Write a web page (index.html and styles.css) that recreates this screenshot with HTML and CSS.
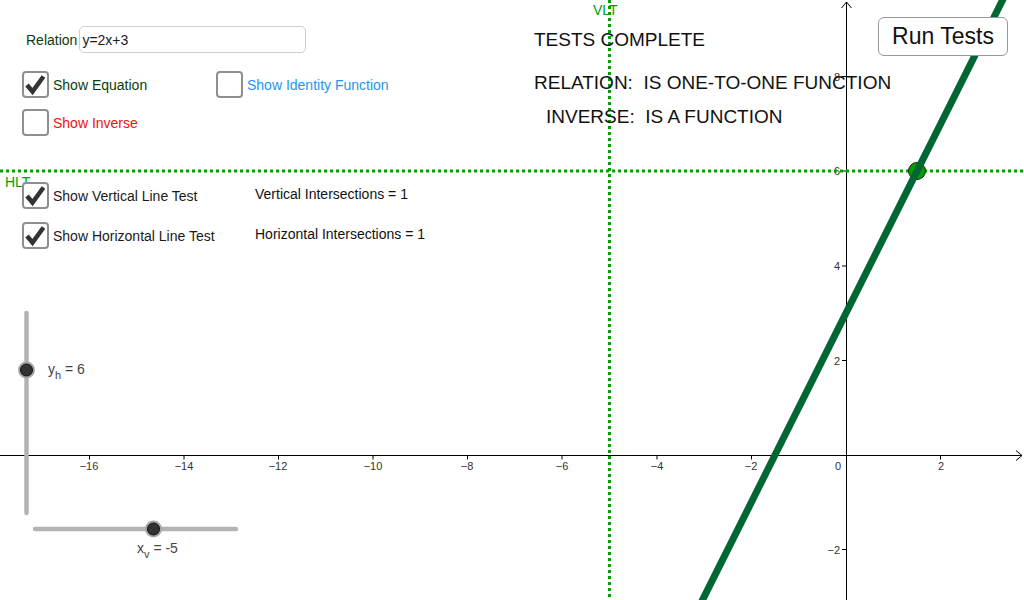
FILE: index.html
```html
<!DOCTYPE html>
<html lang="en">
<head>
<meta charset="UTF-8">
<meta name="viewport" content="width=device-width, initial-scale=1.0">
<title>One-to-One Function Tests</title>
<link rel="stylesheet" href="styles.css">
</head>
<body>
<div class="applet">
    <!-- graphics view: axes, test lines, relation, sliders -->
    <svg class="graph" width="1024" height="600" viewBox="0 0 1024 600">
        <g stroke="#000" stroke-width="1" fill="none">
            <line x1="0" y1="455.5" x2="1022" y2="455.5"/>
            <polyline points="1016,450.5 1022,455.5 1016,460.5"/>
            <line x1="846.5" y1="2" x2="846.5" y2="600"/>
            <polyline points="841.5,8 846.5,2 851.5,8"/>
            <path d="M89.5 455.5v4M184 455.5v4M278.5 455.5v4M373 455.5v4M467.5 455.5v4M562 455.5v4M657 455.5v4M751.5 455.5v4M940.5 455.5v4"/>
            <path d="M842 76.5h4.5M842 171h4.5M842 266h4.5M842 360.5h4.5M842 549.5h4.5"/>
        </g>
        <g class="tick-label" text-anchor="middle">
            <text x="89" y="470">−16</text>
            <text x="184" y="470">−14</text>
            <text x="278" y="470">−12</text>
            <text x="373" y="470">−10</text>
            <text x="467" y="470">−8</text>
            <text x="562" y="470">−6</text>
            <text x="657" y="470">−4</text>
            <text x="751" y="470">−2</text>
            <text x="838" y="470">0</text>
            <text x="941" y="470">2</text>
        </g>
        <g class="tick-label" text-anchor="end">
            <text x="840" y="80.5">8</text>
            <text x="840" y="175">6</text>
            <text x="840" y="270">4</text>
            <text x="840" y="364.5">2</text>
            <text x="840" y="553.5">−2</text>
        </g>

        <!-- vertical and horizontal line tests -->
        <g stroke="#00a000" stroke-width="3" stroke-dasharray="3 3">
            <line x1="609.5" y1="0" x2="609.5" y2="600"/>
            <line x1="0" y1="171" x2="1024" y2="171"/>
        </g>
        <text class="test-label" x="593" y="15">VLT</text>
        <text class="test-label" x="5" y="187">HLT</text>

        <!-- relation y=2x+3 -->
        <circle cx="917" cy="171" r="8.5" fill="#00a000" stroke="#1a1a1a" stroke-width="1"/>
        <line x1="697.5" y1="610" x2="1007.6" y2="-10" stroke="#006633" stroke-width="7"/>

        <!-- slider y_h -->
        <line x1="26.5" y1="313" x2="26.5" y2="513" stroke="#b3b3b3" stroke-width="4.5" stroke-linecap="round"/>
        <circle cx="26.5" cy="370" r="8.5" fill="#a6a6a6"/>
        <circle cx="26.5" cy="370" r="6" fill="#333" stroke="#111" stroke-width="1"/>
        <text class="slider-label" x="48" y="374">y<tspan class="sub" dy="5">h</tspan><tspan dy="-5"> = 6</tspan></text>

        <!-- slider x_v -->
        <line x1="35" y1="529" x2="236" y2="529" stroke="#b3b3b3" stroke-width="4.5" stroke-linecap="round"/>
        <circle cx="153.5" cy="529" r="8.5" fill="#a6a6a6"/>
        <circle cx="153.5" cy="529" r="6" fill="#333" stroke="#111" stroke-width="1"/>
        <text class="slider-label" x="137" y="553">x<tspan class="sub" dy="5">v</tspan><tspan dy="-5"> = -5</tspan></text>
    </svg>

    <div class="controls">
        <div class="row row-relation">
            <span class="relation-label">Relation</span>
            <input class="relation-input" type="text" value="y=2x+3">
        </div>
        <div class="row row-equation">
            <label class="opt opt-narrow">
                <span class="box"><svg width="23" height="23" viewBox="0 0 23 23"><path d="M3 12 L8.5 18.5 L19.5 3.5" fill="none" stroke="#333" stroke-width="4.5"/></svg></span>
                <span class="text-green">Show Equation</span>
            </label>
            <label class="opt">
                <span class="box"></span>
                <span class="text-blue">Show Identity Function</span>
            </label>
        </div>
        <div class="row row-inverse">
            <label class="opt">
                <span class="box"></span>
                <span class="text-red">Show Inverse</span>
            </label>
        </div>
        <div class="row row-vlt">
            <label class="opt opt-wide">
                <span class="box"><svg width="23" height="23" viewBox="0 0 23 23"><path d="M3 12 L8.5 18.5 L19.5 3.5" fill="none" stroke="#333" stroke-width="4.5"/></svg></span>
                <span>Show Vertical Line Test</span>
            </label>
            <span class="count">Vertical Intersections = 1</span>
        </div>
        <div class="row row-hlt">
            <label class="opt opt-wide">
                <span class="box"><svg width="23" height="23" viewBox="0 0 23 23"><path d="M3 12 L8.5 18.5 L19.5 3.5" fill="none" stroke="#333" stroke-width="4.5"/></svg></span>
                <span>Show Horizontal Line Test</span>
            </label>
            <span class="count">Horizontal Intersections = 1</span>
        </div>
    </div>

    <div class="status">
        <div class="status-line">TESTS COMPLETE</div>
        <div class="status-line status-relation">RELATION:  IS ONE-TO-ONE FUNCTION</div>
        <div class="status-line status-inverse">INVERSE:  IS A FUNCTION</div>
    </div>

    <button class="run-btn">Run Tests</button>
</div>
</body>
</html>
```

FILE: styles.css
```css
body {
    margin: 0;
    background-color: #fff;
    font-family: "Liberation Sans", Arial, sans-serif;
    color: #1a1a1a;
}
.applet {
    position: relative;
    width: 1024px;
    height: 600px;
    overflow: hidden;
    background-color: #fff;
}
.graph {
    position: absolute;
    left: 0;
    top: 0;
    display: block;
}
.tick-label {
    font-family: "Liberation Sans", Arial, sans-serif;
    font-size: 11px;
    fill: #333;
}
.test-label {
    font-family: "Liberation Sans", Arial, sans-serif;
    font-size: 14px;
    fill: #00a000;
}
.slider-label {
    font-family: "Liberation Sans", Arial, sans-serif;
    font-size: 14px;
    fill: #444;
}
.slider-label .sub {
    font-size: 11px;
}

/* control panel over the graph */
.controls {
    position: absolute;
    left: 22px;
    top: 26px;
    display: flex;
    flex-direction: column;
    font-size: 14px;
}
.row {
    display: flex;
    align-items: center;
    height: 27px;
}
.row-relation {
    padding-left: 4px;
}
.row-equation {
    margin-top: 18px;
}
.row-inverse {
    margin-top: 11px;
}
.row-vlt {
    margin-top: 46px;
}
.row-hlt {
    margin-top: 13px;
}
.relation-label {
    color: #0d3b0d;
}
.relation-input {
    width: 227px;
    height: 27px;
    box-sizing: border-box;
    margin: 0 0 0 2px;
    padding: 0 2px;
    border: 1px solid #cfcfcf;
    border-radius: 5px;
    font-family: "Liberation Sans", Arial, sans-serif;
    font-size: 14px;
    color: #1a1a1a;
    outline: none;
}
.opt {
    display: flex;
    align-items: center;
    gap: 4px;
}
.opt-narrow {
    width: 194px;
}
.opt-wide {
    width: 233px;
}
.box {
    width: 27px;
    height: 27px;
    box-sizing: border-box;
    border: 2px solid #8f8f8f;
    border-radius: 4px;
    background-color: #fff;
    display: flex;
    align-items: center;
    justify-content: center;
}
.box svg {
    display: block;
}
.text-green {
    color: #0d3b0d;
}
.text-blue {
    color: #1e96f0;
}
.text-red {
    color: #f21010;
}
.count {
    margin-bottom: 4px;
    color: #111;
}

/* test results */
.status {
    position: absolute;
    left: 534px;
    top: 29px;
    font-size: 19px;
    line-height: 22px;
    color: #111;
}
.status-line {
    white-space: pre;
}
.status-relation {
    margin-top: 21px;
}
.status-inverse {
    margin-top: 12px;
    padding-left: 12px;
}

.run-btn {
    position: absolute;
    left: 878px;
    top: 17px;
    width: 130px;
    height: 39px;
    padding: 0;
    background-color: #fff;
    border: 1px solid #999;
    border-radius: 6px;
    font-family: "Liberation Sans", Arial, sans-serif;
    font-size: 23px;
    color: #111;
    cursor: pointer;
}
```
